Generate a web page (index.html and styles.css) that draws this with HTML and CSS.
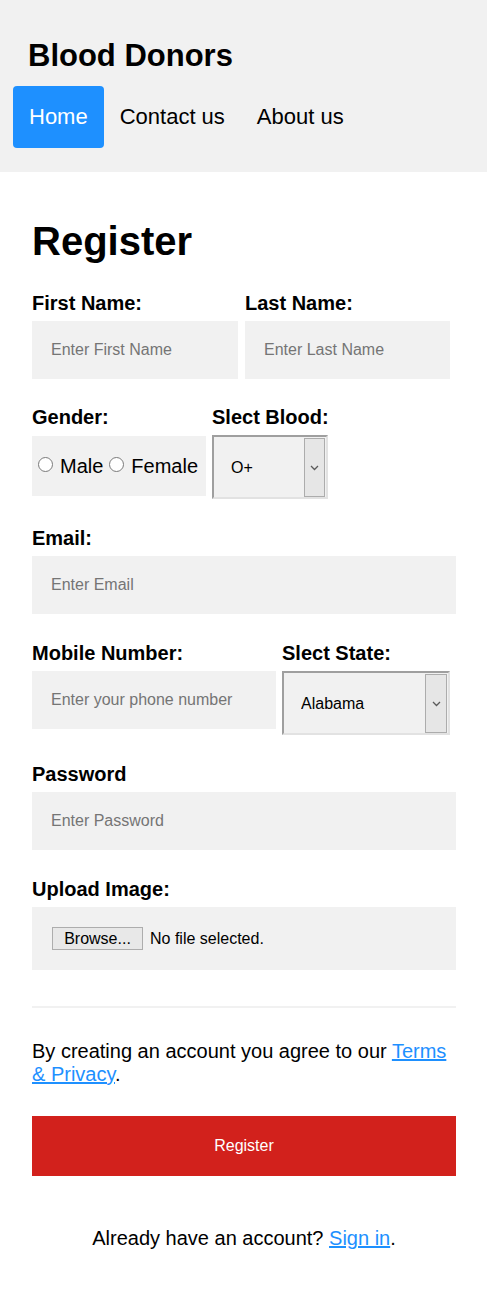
FILE: index.html
```html
<!DOCTYPE html>
<html lang="en">
<head>
<meta charset="utf-8">
<title>Blood Donors - Register</title>
<link rel="stylesheet" href="styles.css">
</head>
<body>
<header class="site-header">
  <h1 class="brand">Blood Donors</h1>
  <nav class="nav">
    <a href="#" class="nav-link active">Home</a>
    <a href="#" class="nav-link">Contact us</a>
    <a href="#" class="nav-link">About us</a>
  </nav>
</header>

<main class="main">
  <form class="register-form">
    <h2 class="title">Register</h2>

    <div class="row row-names">
      <div class="field">
        <label class="label" for="fname">First Name:</label>
        <input class="input" id="fname" type="text" placeholder="Enter First Name">
      </div>
      <div class="field">
        <label class="label" for="lname">Last Name:</label>
        <input class="input" id="lname" type="text" placeholder="Enter Last Name">
      </div>
    </div>

    <div class="row row-gender">
      <div class="field">
        <span class="label">Gender:</span>
        <div class="gender-box">
          <input class="radio" type="radio" name="gender" id="male"><label for="male" class="radio-text">Male</label>
          <input class="radio" type="radio" name="gender" id="female"><label for="female" class="radio-text">Female</label>
        </div>
      </div>
      <div class="field">
        <label class="label" for="blood">Slect Blood:</label>
        <div class="select">
          <select id="blood" class="select-el">
            <option>O+</option><option>O-</option><option>A+</option><option>A-</option>
            <option>B+</option><option>B-</option><option>AB+</option><option>AB-</option>
          </select>
          <span class="select-arrow"><svg width="9" height="6" viewBox="0 0 9 6"><path d="M1 1 L4.5 4.5 L8 1" fill="none" stroke="#5a5a5a" stroke-width="1.3"/></svg></span>
        </div>
      </div>
    </div>

    <div class="row">
      <div class="field">
        <label class="label" for="email">Email:</label>
        <input class="input" id="email" type="email" placeholder="Enter Email">
      </div>
    </div>

    <div class="row row-mobile">
      <div class="field">
        <label class="label" for="phone">Mobile Number:</label>
        <input class="input" id="phone" type="tel" placeholder="Enter your phone number">
      </div>
      <div class="field">
        <label class="label" for="state">Slect State:</label>
        <div class="select select-state">
          <select id="state" class="select-el">
            <option>Alabama</option><option>Alaska</option><option>Arizona</option><option>Arkansas</option>
          </select>
          <span class="select-arrow"><svg width="9" height="6" viewBox="0 0 9 6"><path d="M1 1 L4.5 4.5 L8 1" fill="none" stroke="#5a5a5a" stroke-width="1.3"/></svg></span>
        </div>
      </div>
    </div>

    <div class="row">
      <div class="field">
        <label class="label" for="pass">Password</label>
        <input class="input" id="pass" type="password" placeholder="Enter Password">
      </div>
    </div>

    <div class="row">
      <div class="field">
        <span class="label">Upload Image:</span>
        <label class="upload">
          <span class="browse">Browse...</span>
          <span class="file-name">No file selected.</span>
          <input type="file" class="file-hidden">
        </label>
      </div>
    </div>

    <hr class="divider">

    <p class="terms">By creating an account you agree to our <a href="#" class="link">Terms &amp; Privacy</a>.</p>

    <button type="submit" class="submit">Register</button>

    <p class="signin">Already have an account? <a href="#" class="link">Sign in</a>.</p>
  </form>
</main>
</body>
</html>
```

FILE: styles.css
```css
* {
  box-sizing: border-box;
}

body {
  margin: 0;
  font-family: "Liberation Sans", Arial, sans-serif;
  color: #000;
  background: #fff;
}

/* Header */
.site-header {
  background: #f1f1f1;
  padding: 38px 0 24px 13px;
}

.brand {
  margin: 0 0 12px 15px;
  font-size: 31px;
  line-height: 36px;
  font-weight: bold;
}

.nav {
  display: flex;
}

.nav-link {
  padding: 18px 16px;
  font-size: 22px;
  line-height: 26px;
  color: #000;
  text-decoration: none;
  border-radius: 4px;
}

.nav-link.active {
  background: #1e90ff;
  color: #fff;
}

/* Main form */
.main {
  padding: 46px 31px 40px 32px;
}

.register-form {
  width: 424px;
}

.title {
  margin: 0 0 28px;
  font-size: 40px;
  line-height: 46px;
  font-weight: bold;
}

.row {
  display: grid;
  grid-template-columns: 1fr;
  margin-bottom: 28px;
}

.row-names {
  grid-template-columns: 206px 205px;
  column-gap: 7px;
  margin-bottom: 27px;
}

.row-gender {
  grid-template-columns: 174px 116px;
  column-gap: 6px;
}

.row-mobile {
  grid-template-columns: 244px 168px;
  column-gap: 6px;
}

.field {
  display: flex;
  flex-direction: column;
  min-width: 0;
}

.label {
  display: block;
  font-size: 20px;
  line-height: 23px;
  font-weight: bold;
  margin-bottom: 6px;
  white-space: nowrap;
}

.input {
  width: 100%;
  height: 58px;
  border: 0;
  background: #f1f1f1;
  padding: 0 19px;
  font-family: "Liberation Sans", Arial, sans-serif;
  font-size: 16px;
  color: #000;
  outline: none;
}

.input::placeholder {
  color: #757575;
}

/* Gender */
.gender-box {
  display: flex;
  align-items: center;
  height: 60px;
  margin-top: 1px;
  background: #f1f1f1;
  font-size: 20px;
  line-height: 23px;
}

.radio {
  appearance: none;
  -webkit-appearance: none;
  width: 15px;
  height: 15px;
  margin: 0 7px 3px 6px;
  border: 1px solid #7a7a7a;
  border-radius: 50%;
  background: #fff;
  flex: none;
}

.radio-text {
  color: #000;
}

/* Select */
.select {
  display: flex;
  height: 64px;
  border: 2px solid;
  border-color: #9f9f9f #e2e2e2 #e2e2e2 #9f9f9f;
  background: #f1f1f1;
}

.select-el {
  appearance: none;
  -webkit-appearance: none;
  flex: 1;
  min-width: 0;
  border: 0;
  background: transparent;
  padding: 0 0 0 17px;
  font-family: "Liberation Sans", Arial, sans-serif;
  font-size: 16px;
  color: #000;
  outline: none;
}

.select-arrow {
  flex: none;
  width: 21px;
  margin: 1px 1px 0 0;
  border: 1px solid #acacac;
  background: #e6e6e6;
  display: flex;
  align-items: center;
  justify-content: center;
}

.select-state .select-arrow {
  width: 22px;
}

/* Upload */
.upload {
  display: flex;
  align-items: center;
  height: 63px;
  padding-left: 20px;
  background: #f1f1f1;
  font-size: 16px;
  cursor: pointer;
}

.browse {
  display: inline-flex;
  align-items: center;
  justify-content: center;
  width: 91px;
  height: 23px;
  border: 1px solid #adadad;
  background: #e8e8e8;
  margin-right: 7px;
  font-size: 16px;
}

.file-hidden {
  display: none;
}

/* Footer bits */
.divider {
  height: 2px;
  border: 0;
  background: #f1f1f1;
  margin: 36px 0 32px;
}

.terms {
  margin: 0;
  font-size: 20px;
  line-height: 23px;
}

.link {
  color: #1e90ff;
  text-decoration: underline;
}

.submit {
  display: block;
  width: 100%;
  height: 60px;
  margin-top: 30px;
  border: 0;
  background: #d2211c;
  color: #fff;
  font-family: "Liberation Sans", Arial, sans-serif;
  font-size: 16px;
  cursor: pointer;
}

.signin {
  margin: 51px 0 0;
  text-align: center;
  font-size: 20px;
  line-height: 23px;
}
```
